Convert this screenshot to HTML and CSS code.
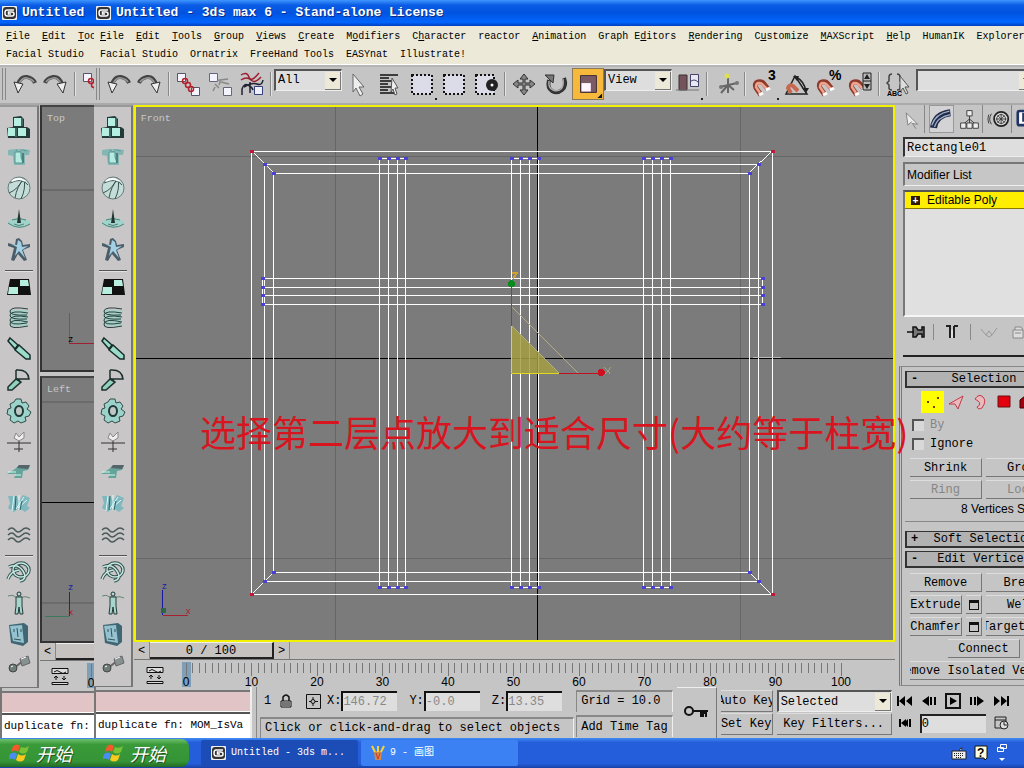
FILE: index.html
```html
<!DOCTYPE html>
<html lang="en">
<head>
  <meta charset="UTF-8">
  <meta name="viewport" content="width=device-width, initial-scale=1.0">
  <title>Untitled - 3ds max 6 - Stand-alone License</title>
  <link rel="stylesheet" href="styles.css">
</head>
<body>
  <!-- icon library -->
  <svg class="defs" aria-hidden="true">
    <symbol id="logo" viewBox="0 0 15 14"><rect width="15" height="14" rx="1" fill="#eee"/><rect x="1" y="1" width="13" height="12" rx="3" fill="#333"/><path d="M12 4H5Q3 4 3 7t2 3h5q2 0 2-2t-2-2H6.500v2H9" fill="none" stroke="#fff" stroke-width="1.500"/></symbol>
    <symbol id="undo" viewBox="0 0 32 32"><path d="M10 16Q13 8 19 9q6 1 8 6" fill="none" stroke="#444" stroke-width="4"/><path d="M11 16Q14 9 19 10q5 1 7 4" fill="none" stroke="#999" stroke-width="1.500"/><path d="M6 14l9 2-5 9z" fill="#eee" stroke="#333"/></symbol>
    <symbol id="redo" viewBox="0 0 32 32"><path d="M22 16Q19 8 13 9q-6 1-8 6" fill="none" stroke="#444" stroke-width="4"/><path d="M21 16Q18 9 13 10q-5 1-7 4" fill="none" stroke="#999" stroke-width="1.500"/><path d="M26 14l-9 2 6 9z" fill="#eee" stroke="#333"/></symbol>
    <symbol id="link" viewBox="0 0 32 32"><path d="M5.500 5.500h8v8h-8zM19.500 19.500h8v8h-8z" fill="#f4f4ff" stroke="#556"/><g fill="none" stroke="#b3202c" stroke-width="1.500"><circle cx="13" cy="13" r="2.500"/><circle cx="16" cy="17" r="2.500"/><circle cx="19" cy="21" r="2.500"/></g></symbol>
    <symbol id="unlink" viewBox="0 0 32 32"><path d="M5.500 5.500h8v8h-8zM19.500 19.500h8v8h-8z" fill="#f4f4ff" stroke="#667"/><path d="M13 13q5-3 2 4m-4-1l4 4m1-8l8-1m-7 3l8 2M11 19l-2 4" fill="none" stroke="#888" stroke-width="1.500"/></symbol>
    <symbol id="bind" viewBox="0 0 32 32"><path d="M5 7q6-4 8 2t10-4M5 12q6-4 10 0t10-3" fill="none" stroke="#9c2030" stroke-width="1.500"/><path d="M6 27v-6q2-6 6-4t5 5M8 19q8-5 13-3t6-4M14 14v11" fill="none" stroke="#223" stroke-width="1.500"/><path d="M18.500 18.500h8v8h-8z" fill="#eef" stroke="#33407a"/></symbol>
    <symbol id="cursor" viewBox="0 0 32 32"><path d="M11 6l11 13h-5l4 7-3 2-4-8-3 4z" fill="#eee" stroke="#666"/></symbol>
    <symbol id="byname" viewBox="0 0 32 32"><path d="M6 7h18M6 10h9M6 13h13M6 16h8M6 19h11M6 22h8M6 25h14" stroke="#111" stroke-width="1.500"/><path d="M18 10l6 10h-3l2 6-2 1-2-6-2 3z" fill="#eee" stroke="#555"/></symbol>
    <symbol id="region" viewBox="0 0 32 32"><rect x="6" y="7" width="20" height="19" fill="#dcdce8" stroke="#111" stroke-width="2" stroke-dasharray="2 2"/></symbol>
    <symbol id="crossing" viewBox="0 0 32 32"><rect x="6" y="7" width="18" height="19" fill="#dcdce8" stroke="#111" stroke-width="2" stroke-dasharray="2 2"/><circle cx="22" cy="17" r="6" fill="#222"/><circle cx="22" cy="17" r="1.500" fill="#fff"/></symbol>
    <symbol id="move" viewBox="0 0 32 32"><path d="M16 6l4 5h-3v4h5v-3l5 4-5 4v-3h-5v5h3l-4 5-4-5h3v-5h-5v3l-5-4 5-4v3h5v-4h-3z" fill="#888" stroke="#333"/></symbol>
    <symbol id="rotate" viewBox="0 0 32 32"><path d="M9 12q-2 8 3 11t10-1 2-12" fill="none" stroke="#333" stroke-width="4"/><path d="M9 13q-1 7 4 9t8-1 2-10" fill="none" stroke="#aaa" stroke-width="1.500"/><path d="M5 7h9l-1 8z" fill="#777" stroke="#333"/></symbol>
    <symbol id="scale" viewBox="0 0 32 32"><path d="M8 7h17v18H8z" fill="#7a5a64" stroke="#3a2a38"/><path d="M9 15h10v9H9z" fill="#fff4ff"/><path d="M31 26v5h-5z" fill="#111"/></symbol>
    <symbol id="pivot" viewBox="0 0 32 32"><path d="M7 7h8v15H7z" fill="#76525d" stroke="#333"/><path d="M18.500 6.500h8v12h-8zM18 14q4-4 8 0" fill="#e8e8f4" stroke="#446"/><path d="M4 22h23" stroke="#777"/></symbol>
    <symbol id="manip" viewBox="0 0 32 32"><path d="M18 9v16M10 19l17-4M11 25l7-8 6 5" stroke="#666" stroke-width="2" fill="none"/><circle cx="17" cy="8" r="2.500" fill="#dde04a"/><circle cx="27" cy="15" r="2" fill="#777"/><circle cx="11" cy="19" r="2" fill="#777"/></symbol>
    <symbol id="magnet" viewBox="0 0 32 32"><path d="M13 27l-5-7q-2-5 2-6t6 2l4 5" fill="none" stroke="#8d3a2c" stroke-width="5"/><path d="M12 25l-4-6q0-4 3-4t5 3l3 3" fill="none" stroke="#f0a38c" stroke-width="2.500"/><path d="M11 27l4-2M18 22l4-2" stroke="#fff" stroke-width="3"/></symbol>
    <symbol id="anglesnap" viewBox="0 0 32 32"><path d="M6 26h21L15 8zM16 9q8 4 10 14" fill="none" stroke="#222" stroke-width="1.500"/><path d="M11 25l-3-5q1-4 5-2l5 5" fill="none" stroke="#c7694f" stroke-width="4"/><path d="M13 8h6l-2 5zM22 20h7l-3 5z" fill="#222"/></symbol>
    <symbol id="spinsnap" viewBox="0 0 32 32"><use href="#magnet"/><path d="M19 5h8v17h-8zM19 13h8" fill="#bbb" stroke="#222"/><path d="M23 6l3 5h-6zM23 21l3-5h-6z" fill="#222"/></symbol>
    <symbol id="sets" viewBox="0 0 32 32"><path d="M10 6q-3 0-3 3v4l-2 2 2 2v3q0 2 3 2M15 6q3 0 3 3v4l2 2-2 2v3q0 2-3 2" fill="none" stroke="#444" stroke-width="1.500"/><path d="M18 8l9 11h-4l3 6-2 1-3-6-3 4z" fill="#ddd" stroke="#555"/></symbol>

    <symbol id="t-boxes" viewBox="0 0 26 26"><path d="M7 4l8-1 3 3v8h3l3 2v9H2l-1-10 6-1z" fill="#223b39"/><path d="M8 5h7v8H8zM2 15h7v8H2zM12 15h8v8h-8z" fill="#b4efe2"/><path d="M16 5v8m-6 2v9" stroke="#65928b"/></symbol>
    <symbol id="t-shirt" viewBox="0 0 26 26"><path d="M2 6l7-1h8l7 1-1 5h-4v10H8l-1-9-5-1z" fill="#84b6b3"/><path d="M9 8h6v5l2 6H9zM10 6q3 3 6 0l5 1" fill="#b3ebe0" stroke="#5b9392"/><path d="M17 9v10" stroke="#4d807e" stroke-width="2"/></symbol>
    <symbol id="t-ball" viewBox="0 0 26 26"><circle cx="13" cy="13" r="11" fill="#c4ddd8" stroke="#667c7c"/><path d="M4 8q12-6 18 2M3 18Q13 14 17 3M9 23q2-12 9-19M15 24Q20 14 18 4" fill="none" stroke="#38534f"/><path d="M6 6q7-4 13 0" stroke="#fff" stroke-width="2" fill="none"/></symbol>
    <symbol id="t-drop" viewBox="0 0 26 26"><ellipse cx="13" cy="17" rx="11" ry="5" fill="#a0d3ca"/><path d="M2 17q11 8 22 1M6 14q7-3 14 0M8 18q5 3 10 0" fill="none" stroke="#54817a"/><path d="M13 3l2 14h-4z" fill="#213432"/></symbol>
    <symbol id="t-star" viewBox="0 0 26 26"><path d="M10 2l3-1 3 3 1 4 7-1v3l-7 3 4 10-3 1-6-7-4 7-3-1 3-12-6-2V6l7 2z" fill="#4c5d6a"/><path d="M12 3l3 2 1 5 6-1-6 4 3 8-6-7-4 5 2-9-6-3 6 1z" fill="#a3d1e3"/></symbol>
    <symbol id="t-check" viewBox="0 0 26 26"><path d="M4 5h19l2 16H1z" fill="#111"/><path d="M14 6h8l1 6h-9zM3 13h9v7H2z" fill="#b8eee0"/></symbol>
    <symbol id="t-spring" viewBox="0 0 26 26"><path d="M3 5h18v16H3z" fill="#a5cfc7"/><path d="M22 4Q5 1 4 6t17 4M22 8Q5 5 4 10t17 4M22 12Q5 9 4 15t17 3M22 17Q5 13 4 19t18 2" fill="none" stroke="#29413e"/></symbol>
    <symbol id="t-damper" viewBox="0 0 26 26"><path d="M4 2l8 7-3 4-7-8zM13 9l11 10v4h-4L9 14z" fill="#9adbc9" stroke="#172b28" stroke-width="1.500"/></symbol>
    <symbol id="t-hinge" viewBox="0 0 26 26"><path d="M10 12L2 20v3h4l9-8z" fill="#91d1c0" stroke="#1c302c" stroke-width="1.500"/><path d="M10 3v8l4 3M10 3q12-1 13 9H11" fill="none" stroke="#1c302c" stroke-width="1.500"/></symbol>
    <symbol id="t-gear" viewBox="0 0 26 26"><path d="M10 1h5l1 4 4-1 3 4-2 3 4 3-2 4-4 1 1 4-5 2-3-2-4 2-4-3 1-4-4-2 1-5 3-1-1-4 4-2z" fill="#9bd2ca" stroke="#314b48"/><ellipse cx="13" cy="13" rx="4" ry="5" fill="#bfc7c5" stroke="#203a38" stroke-width="2"/></symbol>
    <symbol id="t-wind" viewBox="0 0 26 26"><path d="M1 14h24M13 8v15M8 20h9" stroke="#333"/><path d="M10 4l3 4 5-5v6l-5 3-5-3z" fill="#eee" stroke="#888"/></symbol>
    <symbol id="t-car" viewBox="0 0 26 26"><path d="M9 9l4-4 11 1-2 4-5 1-1 7H8l2-4H1l5-3z" fill="#65a49a"/><path d="M13 5h11l-2 4-11-1z" fill="#56646a"/><path d="M2 12h8m-1 3h6" stroke="#cfe"/></symbol>
    <symbol id="t-crack" viewBox="0 0 26 26"><path d="M2 5h8l3 5 4-6 7 3-3 8 3 2-5 4-6-4-5 4-6-4 2-5z" fill="#7fb8be"/><path d="M8 5L6 20M13 4v15m5-13l-8 12m11-9l-9 8" stroke="#dffafa"/><path d="M10 5l-1 14m7-9l-2 9" stroke="#266"/></symbol>
    <symbol id="t-water" viewBox="0 0 26 26"><path d="M2 8q4-4 7 0t7 0 8 0M2 13q4-4 7 0t7 0 8 0M2 18q4-4 7 0t7 0 8 0" fill="none" stroke="#4c5a5a" stroke-width="1.500"/></symbol>
    <symbol id="t-knot" viewBox="0 0 26 26"><g fill="none" stroke="#34504e" stroke-width="3.500"><ellipse cx="15" cy="11" rx="8" ry="7"/><path d="M3 8q9-4 14 4t-3 10M2 20q3-8 11-9"/></g><g fill="none" stroke="#c5e9e2" stroke-width="1.500"><ellipse cx="15" cy="11" rx="8" ry="7"/><path d="M3 8q9-4 14 4t-3 10M2 20q3-8 11-9"/></g></symbol>
    <symbol id="t-man" viewBox="0 0 26 26"><circle cx="13" cy="4" r="2" fill="#b9d7d2" stroke="#233"/><path d="M2 6q4-2 8 1h6q4-1 8 1" fill="none" stroke="#687"/><path d="M10 7v9l-1 8h3l1-7 1 7h3l-1-8V7z" fill="#a7d4cc" stroke="#243c38"/></symbol>
    <symbol id="t-pc" viewBox="0 0 26 26"><path d="M3 4l15-2 4 3v16l-5 4-12-3z" fill="#3f6672"/><path d="M4 5l12-1 2 18-11-2z" fill="#94c2d0"/><path d="M11 7l1 9m-4-8v3m7-3v3M8 18l7 1" stroke="#355"/></symbol>
    <symbol id="t-joint" viewBox="0 0 26 26"><path d="M8 16l9-7" stroke="#666" stroke-width="2"/><circle cx="7" cy="16" r="4" fill="#6f7c79" stroke="#444"/><path d="M14 7l8-3 2 7-8 3z" fill="#879190" stroke="#666"/><path d="M15 7l5-2M5 15l2-1" stroke="#fff"/></symbol>
    <symbol id="keymode" viewBox="0 0 18 18"><path d="M1 1.500h16v5H1zM1 15.500h16v2H1z" fill="#ddd" stroke="#111"/><path d="M3 5q3-3 6 0t6 0M5 13V9M3 11l2-2 2 2M13 9v4m-2-2l2 2 2-2" fill="none" stroke="#111"/></symbol>
    <symbol id="flag" viewBox="0 0 22 20"><path d="M4 3q4-3 7 0L9 9q-3-3-7 0z" fill="#f25a29"/><path d="M12 4q4 2 8-1l-2 6q-4 3-8 0z" fill="#79c233"/><path d="M1 11q4-3 7 0l-2 6q-3-3-7 0z" fill="#4a8df2"/><path d="M9 11q4 3 8 0l-2 6q-4 3-8 0z" fill="#fbc820"/></symbol>
  </svg>

  <!-- older window, only its left edge is in view -->
  <section class="app behind">
    <header class="titlebar"><svg class="logo"><use href="#logo"/></svg><span>Untitled</span></header>
    <nav class="menus">
      <div class="menu-row"><a href="#"><u>F</u>ile</a><a href="#"><u>E</u>dit</a><a href="#"><u>T</u>ools</a></div>
      <div class="menu-row"><a href="#">Facial Studio</a></div>
    </nav>
    <div class="toolbar">
      <i class="grip"></i>
      <button class="tool" aria-label="Undo"><svg><use href="#undo"/></svg></button>
      <button class="tool" aria-label="Redo"><svg><use href="#redo"/></svg></button>
      <i class="sep"></i>
      <button class="tool" aria-label="Link"><svg><use href="#link"/></svg></button>
    </div>
    <main class="work">
      <aside class="side-tools"></aside>
      <div class="center">
        <div class="viewport small">
          <svg viewBox="41 107 53 264" preserveAspectRatio="xMinYMin slice" shape-rendering="crispEdges">
            <path d="M40 190.500h60" stroke="#696969" stroke-width="2"/>
            <text x="46" y="121" class="view-name">Top</text>
            <path d="M68.500 314v30" stroke="#3c7a3c"/><path d="M68 344.500h30" stroke="#a02030"/>
            <text x="67" y="343" class="axis">z</text>
          </svg>
        </div>
        <div class="viewport small">
          <svg viewBox="41 377 53 264" preserveAspectRatio="xMinYMin slice" shape-rendering="crispEdges">
            <path d="M40 401.500h60M40 602.500h60" stroke="#6b6b6b" stroke-width="2"/><path d="M40 501.500h60" stroke="#000"/>
            <text x="46" y="391" class="view-name">Left</text>
            <path d="M68.500 592v24" stroke="#2020a0"/><path d="M44 616.500h24" stroke="#3c7a5c"/>
            <text x="67" y="590" class="axis blue">z</text><text x="67" y="615" class="axis red">x</text>
          </svg>
        </div>
        <div class="scrub"><button class="step">&lt;</button><button class="slider"></button></div>
        <div class="timeline"><svg class="keymode"><use href="#keymode"/></svg><div class="ruler"></div></div>
      </div>
    </main>
    <footer class="status">
      <div class="listener"><div class="pink"></div><div class="white">duplicate fn:</div></div>
    </footer>
    <div class="taskbar"><button class="start"><svg><use href="#flag"/></svg>开始</button></div>
  </section>

  <section class="app front">
    <header class="titlebar"><svg class="logo"><use href="#logo"/></svg><span>Untitled - 3ds max 6 - Stand-alone License</span></header>
    <nav class="menus">
      <div class="menu-row">
        <a href="#"><u>F</u>ile</a><a href="#"><u>E</u>dit</a><a href="#"><u>T</u>ools</a><a href="#"><u>G</u>roup</a><a href="#"><u>V</u>iews</a><a href="#"><u>C</u>reate</a><a href="#">M<u>o</u>difiers</a><a href="#">C<u>h</u>aracter</a><a href="#">reactor</a><a href="#"><u>A</u>nimation</a><a href="#">Graph E<u>d</u>itors</a><a href="#"><u>R</u>endering</a><a href="#">C<u>u</u>stomize</a><a href="#"><u>M</u>AXScript</a><a href="#"><u>H</u>elp</a><a href="#">HumanIK</a><a href="#">Explorer</a>
      </div>
      <div class="menu-row">
        <a href="#">Facial Studio</a><a href="#">Ornatrix</a><a href="#">FreeHand Tools</a><a href="#">EASYnat</a><a href="#">Illustrate!</a>
      </div>
    </nav>
    <div class="toolbar">
      <i class="grip"></i>
      <button class="tool" aria-label="Undo"><svg><use href="#undo"/></svg></button>
      <button class="tool" aria-label="Redo"><svg><use href="#redo"/></svg></button>
      <i class="sep"></i>
      <button class="tool" aria-label="Link"><svg><use href="#link"/></svg></button>
      <button class="tool" aria-label="Unlink"><svg><use href="#unlink"/></svg></button>
      <button class="tool" aria-label="Bind"><svg><use href="#bind"/></svg></button>
      <i class="sep"></i>
      <div class="drop"><select aria-label="Selection filter"><option>All</option></select></div>
      <button class="tool" aria-label="Select"><svg><use href="#cursor"/></svg></button>
      <button class="tool" aria-label="Select by name"><svg><use href="#byname"/></svg></button>
      <button class="tool more" aria-label="Region"><svg><use href="#region"/></svg></button>
      <button class="tool" aria-label="Window"><svg><use href="#region"/></svg></button>
      <button class="tool" aria-label="Crossing"><svg><use href="#crossing"/></svg></button>
      <i class="sep"></i>
      <button class="tool" aria-label="Move"><svg><use href="#move"/></svg></button>
      <button class="tool" aria-label="Rotate"><svg><use href="#rotate"/></svg></button>
      <button class="tool active" aria-label="Scale"><svg><use href="#scale"/></svg></button>
      <div class="drop"><select aria-label="Coordinate system"><option>View</option></select></div>
      <button class="tool more" aria-label="Pivot"><svg><use href="#pivot"/></svg></button>
      <i class="sep"></i>
      <button class="tool" aria-label="Manipulate"><svg><use href="#manip"/></svg></button>
      <i class="sep"></i>
      <button class="tool more" aria-label="Snap"><svg><use href="#magnet"/><text x="20" y="12" class="snap">3</text></svg></button>
      <button class="tool" aria-label="Angle snap"><svg><use href="#anglesnap"/></svg></button>
      <button class="tool" aria-label="Percent snap"><svg><use href="#magnet"/><text x="17" y="12" class="snap">%</text></svg></button>
      <button class="tool" aria-label="Spinner snap"><svg><use href="#spinsnap"/></svg></button>
      <i class="sep"></i>
      <button class="tool" aria-label="Named selections"><svg><use href="#sets"/><text x="5" y="28" class="abc">ABC</text></svg></button>
      <div class="drop wide"><select aria-label="Named selection sets"><option></option></select></div>
    </div>
    <main class="work">
      <aside class="side-tools"></aside>
      <div class="center">
        <div class="viewport current">
          <svg viewBox="136 107 757 534" shape-rendering="crispEdges">
            <path d="M335.500 100v550M740.500 100v550M130 156.500h770M130 559.500h770" stroke="#666"/>
            <path d="M537.500 100v550M130 358.500h770" stroke="#000"/>
            <text x="140" y="121" class="view-name">Front</text>
            <g fill="none" stroke="#fff">
              <path d="M251.500 151.500h521v444h-521zM264.500 164.500h494v418h-494zM273.500 173.500h476v400h-476z"/>
              <path d="M251 151l22 22M773 151l-24 22M251 596l22-23M773 596l-24-23"/>
              <path d="M379.500 158v430M388.500 158v430M397.500 158v430M405.500 158v430"/>
              <path d="M511.500 158v430M520.500 158v430M529.500 158v430M538.500 158v430"/>
              <path d="M643.500 158v430M652.500 158v430M661.500 158v430M670.500 158v430"/>
              <path d="M262 278.500h500M262 287.500h500M262 295.500h500M262 304.500h500"/>
              <path d="M262.500 278v27M762.500 278v27M379 158.500h27M511 158.500h27M643 158.500h27M379 588.500h27M511 588.500h27M643 588.500h27"/>
            </g>
            <g id="verts"></g>
            <path d="M753 357.500h29" stroke="#bbb"/>
            <path d="M511 326v48h48z" fill="#a59d42" fill-opacity=".85"/>
            <path d="M512 307l66 66M512 326l47 47" stroke="#b5ae82" fill="none"/>
            <path d="M511.500 326v47.500h48" fill="none" stroke="#e0d820"/>
            <path d="M511.500 286v40" stroke="#0b8a1c"/><circle cx="511.500" cy="284" r="3.500" fill="#0b8a1c"/>
            <path d="M559 373.500h42" stroke="#c01020"/><circle cx="601.500" cy="373" r="3.500" fill="#d01020"/>
            <path d="M512 273h5l-4 6" stroke="#d0a030" fill="none" stroke-width="2"/><path d="M605 367l6 7m0-7l-6 7" stroke="#a8a078" fill="none"/>
            <path d="M161.500 591v25" stroke="#1818a8"/><path d="M162 616.500h25" stroke="#a82030"/><path d="M160 609h5v5h-5z" fill="#2d6748"/>
            <text x="161" y="590" class="axis blue">z</text><text x="185" y="615" class="axis red">x</text>
          </svg>
        </div>
        <div class="scrub"><button class="step">&lt;</button><button class="slider">0 / 100</button><button class="step">&gt;</button></div>
        <div class="timeline"><svg class="keymode"><use href="#keymode"/></svg><div class="ruler"></div></div>
      </div>
      <aside class="panel">
        <div class="tabs">
          <button aria-label="Create"><svg viewBox="0 0 26 24"><path d="M7 5l13 13-6-1 4 6M7 5l2 14 4-4" fill="#eee" stroke="#777"/></svg></button>
          <button class="on" aria-label="Modify"><svg viewBox="0 0 26 24"><path d="M4 22Q6 7 23 5" fill="none" stroke="#222c44" stroke-width="8"/><path d="M2 19Q6 6 22 3M5 21Q8 10 23 7" fill="none" stroke="#9fb0d0" stroke-width="1.500"/></svg></button>
          <button aria-label="Hierarchy"><svg viewBox="0 0 26 24"><path d="M13 7v6M6 18l7-6 7 6M13 12v6" stroke="#333" fill="none"/><path d="M10 2.500h6v6h-6zM3 16.500h6v6H3zM10 16.500h6v6h-6zM17 16.500h6v6h-6z" fill="#eee" stroke="#333"/></svg></button>
          <button aria-label="Motion"><svg viewBox="0 0 26 24"><circle cx="16" cy="12" r="8" fill="#ddd" stroke="#222" stroke-width="2"/><circle cx="16" cy="12" r="5" fill="none" stroke="#333"/><path d="M16 6v12M10 12h12M12 8l8 8m0-8l-8 8M5 6q-4 6 0 12M2 7q-2 5 0 10" fill="none" stroke="#333"/></svg></button>
          <button aria-label="Display"><svg viewBox="0 0 26 24"><rect x="2" y="3" width="20" height="16" rx="2" fill="#fff" stroke="#223366" stroke-width="3"/><path d="M8 5v9h8" fill="none" stroke="#223366" stroke-width="2"/></svg></button>
        </div>
        <input class="name" type="text" value="Rectangle01" aria-label="Object name">
        <select class="modifiers" aria-label="Modifier list"><option>Modifier List</option></select>
        <div class="stack"><div class="stack-item"><b>+</b>Editable Poly</div></div>
        <div class="stack-tools">
          <button aria-label="Pin"><svg viewBox="0 0 24 20"><path d="M4 10h7M10 5v10h3l2-3h4v3h2V5h-2v3h-4l-2-3z" fill="#777" stroke="#111" stroke-width="1.500"/></svg></button>
          <i></i>
          <button aria-label="Show end result"><svg viewBox="0 0 24 20"><path d="M6 4h4v12M14 4h4M14 4v12" fill="none" stroke="#222" stroke-width="2"/><path d="M12 8v8" stroke="#fff"/></svg></button>
          <i></i>
          <button aria-label="Make unique"><svg viewBox="0 0 24 20"><path d="M4 7l5 6 3-4 3 4 5-7M9 13l3 2 3-2" fill="none" stroke="#999"/></svg></button>
          <button aria-label="Remove modifier"><svg viewBox="0 0 24 20"><path d="M7 8h10v8H7zM9 8V5h6l2 3M9 11h6" fill="#ddd" stroke="#888"/></svg></button>
        </div>
        <div class="rollouts">
          <div class="rollout">
            <button class="head"><b>-</b>Selection</button>
            <div class="levels">
              <button class="on" aria-label="Vertex"><svg viewBox="0 0 22 20"><path d="M6 9h2v2H6zM12 14h2v2h-2zM16 5h2v2h-2z" fill="#873a00"/></svg></button>
              <button aria-label="Edge"><svg viewBox="0 0 22 20"><path d="M4 12L18 4l-5 13-3-5z" fill="#e9b9be" stroke="#c23b48"/></svg></button>
              <button aria-label="Border"><svg viewBox="0 0 22 20"><path d="M6 7q4-6 8-2t-1 11q-4 2-5-1 5-3 1-6z" fill="#e9b9be" stroke="#c23b48"/></svg></button>
              <button aria-label="Polygon"><svg viewBox="0 0 22 20"><path d="M5 4h12v11H5z" fill="#e3000f" stroke="#6b1010"/></svg></button>
              <button aria-label="Element"><svg viewBox="0 0 22 20"><path d="M3 8l5-4h8v12H3z" fill="#a3000f" stroke="#400"/></svg></button>
            </div>
            <label class="tick off"><input type="checkbox" disabled>By</label>
            <label class="tick"><input type="checkbox">Ignore</label>
            <div class="pair first"><button>Shrink</button><button>Grow</button></div>
            <div class="pair"><button disabled>Ring</button><button disabled>Loop</button></div>
            <p class="count">8 Vertices Selected</p>
          </div>
          <div class="rollout closed"><button class="head"><b>+</b>Soft Selection</button></div>
          <div class="rollout">
            <button class="head"><b>-</b>Edit Vertices</button>
            <div class="pair first"><button>Remove</button><button>Break</button></div>
            <div class="pair"><button>Extrude</button><button class="box" aria-label="Extrude settings"><i></i></button><button>Weld</button></div>
            <div class="pair"><button>Chamfer</button><button class="box" aria-label="Chamfer settings"><i></i></button><button>Target Weld</button></div>
            <div class="pair single"><button>Connect</button></div>
            <div class="pair"><button>Remove Isolated Vertices</button></div>
          </div>
        </div>
      </aside>
    </main>
    <footer class="status">
      <div class="listener"><div class="pink"></div><div class="white">duplicate fn: MOM_IsVa</div></div>
      <div class="info">
        <div class="coords">
          <span class="count-box">1</span>
          <svg class="lock" viewBox="0 0 12 14"><path d="M3 7V3q3-4 6 0v4" fill="none" stroke="#111" stroke-width="1.500"/><path d="M1 7h10v6H1zM2 9h8M2 11h8" fill="#ddd" stroke="#111"/></svg>
          <svg class="abs" viewBox="0 0 15 15"><path d="M.500.500h14v14H.500zM7 3v9M3 7.500h9" fill="none" stroke="#111"/><circle cx="7" cy="7.500" r="2" fill="#bbb" stroke="#111"/></svg>
          <label>X:<input type="text" value="146.72"></label>
          <label>Y:<input type="text" value="-0.0"></label>
          <label>Z:<input type="text" value="13.35"></label>
        </div>
        <div class="prompt">Click or click-and-drag to select objects</div>
      </div>
      <div class="grid-info"><div>Grid = 10.0</div><button>Add Time Tag</button></div>
      <button class="bigkey" aria-label="Set keys"><svg viewBox="0 0 26 14"><circle cx="6" cy="7" r="4" fill="none" stroke="#111" stroke-width="2"/><path d="M10 7h15M18 7v5h2V9h3v4" fill="none" stroke="#111" stroke-width="2"/></svg></button>
      <div class="keys"><button>Auto Key</button><button>Set Key</button></div>
      <div class="filters"><div class="drop"><select aria-label="Key set"><option>Selected</option></select></div><button>Key Filters...</button></div>
      <div class="play">
        <div class="play-row">
          <button aria-label="Go to start"><svg viewBox="0 0 18 16"><path d="M1 3h2v10H1zM9 3v10L3 8zM16 3v10l-6-5z"/></svg></button>
          <button aria-label="Previous"><svg viewBox="0 0 18 16"><path d="M9 3v10L2 8zM10 4h2v8h-2zM14 4h2v8h-2z"/></svg></button>
          <button class="boxed" aria-label="Play"><svg viewBox="0 0 18 16"><path d="M2 1h14v14H2z" fill="none" stroke="#111" stroke-width="2"/><path d="M6 4v8l7-4z"/></svg></button>
          <button aria-label="Next"><svg viewBox="0 0 18 16"><path d="M9 3v10l7-5zM6 4h2v8H6zM2 4h2v8H2z"/></svg></button>
          <button aria-label="Go to end"><svg viewBox="0 0 18 16"><path d="M15 3h2v10h-2zM9 3v10l6-5zM2 3v10l6-5z"/></svg></button>
        </div>
        <div class="play-row">
          <button aria-label="Key mode"><svg viewBox="0 0 18 16"><path d="M3 4h2v8H3zM10 4v8L5 8zM15 4h-2v8h2zM12 4v8L8 8z"/></svg></button>
          <input type="text" value="0" aria-label="Current frame">
          <button class="config" aria-label="Time configuration"><svg viewBox="0 0 18 16"><path d="M3 2h11v11H3zM3 5h11" fill="none" stroke="#222"/><circle cx="12" cy="10" r="4" fill="#ddd" stroke="#222"/><path d="M12 7v3h3" fill="none" stroke="#222"/></svg></button>
        </div>
      </div>
    </footer>
    <div class="taskbar">
      <button class="start"><svg><use href="#flag"/></svg>开始</button>
      <button class="task pressed"><svg class="logo"><use href="#logo"/></svg>Untitled - 3ds m...</button>
      <button class="task"><svg viewBox="0 0 14 16"><path d="M3 6h8l-1 9H4z" fill="#c98a4a"/><path d="M4 7L1 1M7 7V1M10 7l3-6" stroke="#f3d23c" stroke-width="2"/><path d="M5 8l2 6 2-6" stroke="#d33" fill="none"/></svg>9 - 画图</button>
      <div class="tray">
        <svg viewBox="0 0 16 16"><path d="M1 6h14v8H1zM8 6q0-3 4-3" fill="#eee" stroke="#222"/><path d="M3 8.500h10M3 10.500h10M5 12.500h6" stroke="#222" stroke-dasharray="1 1"/></svg>
        <svg viewBox="0 0 16 16"><path d="M2 1h12v12l-2 2-1-2H2z" fill="#ffffe0" stroke="#111"/><text x="4" y="12" class="help">?</text></svg>
        <svg class="restore" viewBox="0 0 16 24"><path d="M5.500 3.500h6v4h-6zM2.500 6.500h6v4h-6z" fill="#2a62dc" stroke="#fff"/><path d="M4 17h6l-3 3z" fill="#fff"/></svg>
      </div>
    </div>
  </section>

  <p class="caption">选择第二层点放大到适合尺寸(大约等于柱宽)</p>

  <script src="script.js"></script>
</body>
</html>
```
FILE: styles.css
```css
* {
  box-sizing: border-box;
}

body {
  margin: 0;
  height: 100vh;
  display: flex;
  position: relative;
  overflow: hidden;
  background: #c5c5c5;
  color: #000;
  font: 12px/16px "Liberation Mono", "Noto Sans CJK SC", monospace;
}

button, input, select {
  font: inherit;
  color: inherit;
  margin: 0;
  padding: 0;
  border: 0;
  border-radius: 0;
  background: none;
}

.defs {
  position: absolute;
  width: 0;
  height: 0;
}

.app {
  display: flex;
  flex-direction: column;
  overflow: hidden;
  min-width: 0;
}

.behind {
  flex: 0 0 94px;
}

.front {
  flex: 1;
}

/* title and menus */
.titlebar {
  flex: 0 0 26px;
  display: flex;
  align-items: center;
  gap: 5px;
  padding-left: 2px;
  background: linear-gradient(#3f95ff, #0a5ce4 20%, #0053e0 50%, #0066ff 85%, #003fc0);
  color: #fff;
  font-size: 13px;
  font-weight: bold;
  white-space: nowrap;
  text-shadow: 1px 1px #0a2a80;
}

.logo {
  width: 15px;
  height: 14px;
  flex: none;
}

.menus {
  flex: 0 0 39px;
  padding-top: 2px;
  background: #ece9d8;
  border-bottom: 1px solid #fff;
  font-size: 10px;
}

.menu-row {
  display: flex;
  gap: 12px;
  height: 18px;
  padding-left: 6px;
  align-items: center;
  white-space: nowrap;
  overflow: hidden;
}

.menu-row a {
  color: #000;
  text-decoration: none;
}

/* main toolbar */
.toolbar {
  flex: 0 0 40px;
  display: flex;
  align-items: center;
  padding-bottom: 3px;
  border-top: 2px solid #b4b4b4;
  border-bottom: 2px solid #aaa;
  background: #c6c5c6;
}

.grip {
  flex: 0 0 4px;
  height: 32px;
  margin: 0 2px;
  border-left: 1px solid #888;
  border-right: 1px solid #888;
}

.tool {
  flex: 0 0 32px;
  height: 32px;
  position: relative;
}

.tool svg {
  display: block;
  width: 32px;
  height: 32px;
}

.tool.active {
  background: #f7b93c;
  border: 1px solid #8a7a5a;
}

.tool.active svg {
  width: 30px;
  height: 30px;
}

.tool.more::after {
  content: "";
  position: absolute;
  right: 1px;
  bottom: 0;
  width: 2px;
  height: 2px;
  background: #222;
}

.sep {
  flex: 0 0 2px;
  height: 24px;
  margin: 0 2px;
  border-left: 1px solid #888;
  border-right: 1px solid #e4e4e4;
}

.snap {
  font: bold 14px "Liberation Sans", sans-serif;
}

.abc {
  font: bold 7px "Liberation Sans", sans-serif;
}

.drop {
  position: relative;
  flex: 0 0 68px;
  height: 22px;
  margin-bottom: 8px;
  background: #dedede;
  border: 1px solid #eee;
  border-top: 2px solid #555;
  border-left: 2px solid #555;
}

.drop select {
  appearance: none;
  width: 100%;
  height: 100%;
  padding-left: 2px;
}

.drop::after {
  content: "";
  position: absolute;
  right: 4px;
  top: 7px;
  border: 4px solid transparent;
  border-top-color: #000;
  border-bottom: 0;
}

.drop::before {
  content: "";
  position: absolute;
  right: 0;
  top: 1px;
  width: 15px;
  height: 17px;
  background: #ece9d8;
  border-right: 1px solid #777;
  border-bottom: 1px solid #777;
  pointer-events: none;
}

.drop.wide {
  flex: 0 0 120px;
  margin-left: 2px;
}

/* work area */
.work {
  flex: 1;
  display: flex;
  min-height: 0;
}

.side-tools {
  flex: 0 0 39px;
  display: flex;
  flex-direction: column;
  align-items: center;
  padding-top: 6px;
  border-top: 2px solid #999;
  border-right: 2px solid #777;
  border-bottom: 1px solid #777;
  background: #c8c6c7;
}

.side-tools button {
  width: 26px;
  height: 31px;
}

.side-tools svg {
  width: 26px;
  height: 26px;
}

.side-tools hr {
  width: 28px;
  height: 2px;
  margin: 2px 0;
  border: 0;
  border-top: 1px solid #555;
  border-bottom: 1px solid #e2e2e2;
}

.center {
  flex: 1;
  display: flex;
  flex-direction: column;
  min-width: 0;
  padding-left: 1px;
}

.viewport {
  flex: 1;
  min-height: 0;
  overflow: hidden;
  background: #7b7b7b;
}

.viewport svg {
  display: block;
  width: 100%;
  height: 100%;
}

.viewport.current {
  border: 2px solid #f2f200;
}

.viewport.small {
  border-top: 2px solid #444;
  border-left: 2px solid #333;
  border-bottom: 2px solid #333;
}

.viewport.small + .viewport.small {
  margin-top: 4px;
}

.view-name {
  font: 10px "Liberation Mono", monospace;
  fill: #c8c8c8;
}

.axis {
  font: 9px "Liberation Mono", monospace;
}

.axis.blue {
  fill: #1818a8;
}

.axis.red {
  fill: #a82030;
}

.scrub {
  flex: 0 0 18px;
  display: flex;
  border-bottom: 1px solid #777;
  background: #c6c2c0;
}

.step {
  flex: 0 0 16px;
  border-right: 1px solid #888;
}

.slider {
  flex: 0 0 124px;
  height: 17px;
  border-right: 2px solid #222;
  border-bottom: 2px solid #222;
  border-top: 1px solid #eee;
}

.timeline {
  flex: 0 0 27px;
  display: flex;
  padding: 0 54px 0 12px;
}

.keymode {
  flex: 0 0 18px;
  height: 18px;
  margin: 6px 22px 0 0;
}

.behind .timeline {
  padding-left: 11px;
}

.ruler {
  flex: 1;
  min-width: 0;
  font-family: "Liberation Sans", sans-serif;
}

.ruler svg {
  display: block;
  width: 100%;
  height: 26px;
  overflow: visible;
}

.behind .timeline {
  overflow: hidden;
}

.behind .ruler {
  flex: 0 0 654px;
}

/* command panel */
.panel {
  flex: 0 0 129px;
  display: flex;
  flex-direction: column;
  overflow: hidden;
  padding-left: 8px;
}

.tabs {
  display: flex;
  gap: 4px;
  height: 28px;
  margin: 0 0 4px -3px;
}

.tabs button {
  flex: 0 0 25px;
  height: 28px;
  border-right: 1px solid #888;
}

.tabs button.on {
  border: 1px solid #999;
  background: #d3d3d6;
}

.tabs svg {
  display: block;
  width: 23px;
  height: 24px;
}

.name, .modifiers {
  appearance: none;
  flex: none;
  width: 100%;
  height: 20px;
  padding-left: 2px;
  background: #dedede;
  border-top: 2px solid #333;
  border-left: 2px solid #333;
  border-bottom: 1px solid #eee;
}

.modifiers {
  height: 24px;
  margin: 5px 0 4px;
  background: #c6c6c6;
  border-top-color: #777;
  border-left-color: #777;
  font: 12px "Liberation Sans", sans-serif;
}

.stack {
  flex: 0 0 127px;
  background: #e0e0e0;
  border-top: 2px solid #555;
  border-left: 2px solid #777;
  border-bottom: 2px solid #f6f6f6;
  font: 12px/16px "Liberation Sans", sans-serif;
}

.stack-item {
  display: flex;
  align-items: center;
  gap: 7px;
  padding-left: 6px;
  background: #ffee00;
  border-bottom: 1px solid #8a7a00;
  white-space: nowrap;
}

.stack-item b {
  width: 9px;
  height: 9px;
  background: #2b1a00;
  color: #fff;
  line-height: 9px;
  font-size: 10px;
  text-align: center;
}

.stack-tools {
  flex: 0 0 40px;
  display: flex;
  align-items: center;
  gap: 5px;
  padding-bottom: 8px;
  border-bottom: 2px solid #222;
}

.stack-tools button {
  flex: 0 0 24px;
  height: 20px;
}

.stack-tools svg {
  display: block;
  width: 24px;
  height: 20px;
}

.stack-tools i {
  flex: 0 0 1px;
  height: 16px;
  margin: 0 1px;
  background: #888;
}

.rollouts {
  flex: 1;
  margin: 9px 0 1px -4px;
  padding: 4px 0 0 3px;
  border-top: 1px solid #888;
  border-left: 3px double #777;
  border-bottom: 1px solid #888;
  overflow: hidden;
}

.rollout {
  width: 158px;
  display: flex;
  flex-direction: column;
}

.head {
  position: relative;
  height: 17px;
  border: 2px solid #333;
  border-top-width: 1px;
  background: #b2b2b2;
  line-height: 14px;
}

.head b {
  position: absolute;
  left: 4px;
}

.levels {
  display: flex;
  gap: 1px;
  padding: 3px 0 2px 16px;
}

.levels button {
  flex: 0 0 23px;
  height: 22px;
}

.levels button.on {
  background: #ffff00;
}

.levels svg {
  display: block;
  width: 22px;
  height: 20px;
}

.tick {
  display: flex;
  align-items: center;
  gap: 6px;
  height: 19px;
  padding-left: 7px;
}

.tick input {
  appearance: none;
  width: 12px;
  height: 12px;
  background: #d8d8d8;
  border-top: 2px solid #555;
  border-left: 2px solid #555;
}

.off, .pair button:disabled {
  color: #858585;
}

.pair {
  display: flex;
  gap: 4px;
  height: 19px;
  margin: 0 5px 3px;
}

.pair.first {
  margin-top: 5px;
}

.pair.single {
  margin: 0 43px 3px;
}

.pair button {
  flex: 1;
  min-width: 0;
  display: flex;
  justify-content: center;
  align-items: center;
  overflow: hidden;
  white-space: nowrap;
  border-top: 1px solid #ddd;
  border-right: 1px solid #777;
  border-bottom: 1px solid #777;
}

.pair .box {
  flex: 0 0 16px;
}

.pair button:has(+ .box) {
  flex: 0 0 52px;
}

.box i {
  width: 10px;
  height: 10px;
  border: 1px solid #111;
  border-top-width: 3px;
}

.count {
  height: 19px;
  margin: 0;
  padding-left: 56px;
  white-space: nowrap;
  font: 12px/14px "Liberation Sans", sans-serif;
}

.closed {
  padding: 9px 0 3px;
  border-top: 1px solid #888;
}

/* status bar */
.status {
  flex: 0 0 50px;
  display: flex;
  gap: 4px;
  white-space: nowrap;
}

.listener {
  flex: 0 0 158px;
  display: flex;
  flex-direction: column;
  padding-top: 3px;
  border-left: 2px solid #777;
  border-right: 2px solid #eee;
}

.pink {
  height: 22px;
  background: #e0c4c6;
  border-top: 2px solid #777;
  border-bottom: 1px solid #fff;
}

.white {
  flex: 1;
  padding: 2px;
  background: #fff;
  border-top: 2px solid #555;
  overflow: hidden;
  font-size: 11px;
  line-height: 18px;
}

.info {
  flex: 0 0 315px;
  display: flex;
  flex-direction: column;
  gap: 4px;
  padding: 2px 0 0 3px;
  border-left: 1px solid #888;
}

.coords {
  display: flex;
  align-items: center;
  height: 24px;
}

.count-box {
  width: 12px;
  margin-left: 4px;
}

.lock {
  width: 12px;
  height: 14px;
  margin: 0 14px 0 4px;
}

.abs {
  width: 15px;
  height: 15px;
  margin-right: 6px;
}

.coords label {
  display: flex;
  align-items: center;
  margin-right: 12px;
}

.coords input {
  width: 56px;
  height: 20px;
  color: #888;
  background: #dedede;
  border-top: 2px solid #111;
  border-left: 2px solid #111;
}

.prompt, .grid-info > * {
  height: 21px;
  padding: 1px 4px;
  border-top: 2px solid #888;
  border-left: 1px solid #888;
  border-right: 1px solid #eee;
  text-align: left;
}

.grid-info {
  flex: 0 0 96px;
  display: flex;
  flex-direction: column;
  gap: 3px;
  margin-left: -2px;
  padding-top: 3px;
}

.grid-info > * {
  height: 22px;
}

.bigkey {
  flex: 0 0 40px;
  border-top: 1px solid #eee;
  border-right: 1px solid #777;
}

.bigkey svg {
  width: 26px;
  height: 14px;
}

.keys {
  flex: 0 0 52px;
  min-width: 0;
}

.keys, .filters {
  display: flex;
  flex-direction: column;
  gap: 1px;
  padding-top: 3px;
}

.keys button, .filters > button {
  display: flex;
  justify-content: center;
  align-items: center;
  height: 22px;
  overflow: hidden;
  border-top: 1px solid #ddd;
  border-right: 1px solid #777;
  border-bottom: 1px solid #777;
}

.filters {
  flex: 0 0 115px;
}

.filters .drop {
  flex: none;
  margin: 0;
}

.play {
  flex: 1;
  min-width: 0;
  padding-top: 3px;
}

.play-row {
  display: flex;
  align-items: center;
  gap: 6px;
  height: 22px;
}

.play-row button {
  flex: 0 0 18px;
  height: 16px;
}

.play-row svg {
  display: block;
  width: 18px;
  height: 16px;
}

.play-row input {
  width: 66px;
  height: 19px;
  background: #dedede;
  border-top: 2px solid #222;
  border-left: 2px solid #222;
}

/* taskbar */
.taskbar {
  flex: 0 0 30px;
  display: flex;
  align-items: center;
  gap: 3px;
  background: linear-gradient(#3f8cf3, #245edb 15%, #245edb 85%, #1941a5);
  color: #fff;
  font-size: 10px;
}

.start {
  flex: 0 0 95px;
  height: 28px;
  display: flex;
  align-items: center;
  gap: 5px;
  padding-left: 9px;
  border-radius: 0 8px 8px 0;
  background: linear-gradient(#6fbf6a, #3a9a3a 20%, #359435 80%, #226a24);
  font: italic 18px "Noto Sans CJK SC", sans-serif;
  text-shadow: 1px 1px #245024;
}

.behind .start {
  border-radius: 0;
}

.start svg {
  width: 22px;
  height: 20px;
}

.task {
  flex: 0 0 157px;
  height: 26px;
  display: flex;
  align-items: center;
  gap: 5px;
  padding-left: 10px;
  border-radius: 2px;
  background: #3c81f3;
  text-align: left;
}

.task.pressed {
  margin-left: 9px;
  background: #1c4cb6;
}

.task > svg:not(.logo) {
  width: 14px;
  height: 16px;
}

.tray {
  margin-left: auto;
  padding-right: 13px;
  display: flex;
  align-items: center;
  gap: 6px;
}

.tray svg {
  width: 16px;
  height: 16px;
}

.tray .restore {
  height: 24px;
}

.help {
  font: bold 12px "Liberation Sans", sans-serif;
}

/* note written across the viewport */
.caption {
  position: absolute;
  left: 200px;
  top: 406px;
  margin: 0;
  color: #d8151f;
  font: 36px/50px "Noto Sans CJK SC", sans-serif;
  white-space: nowrap;
  pointer-events: none;
}
```
FILE: script.js
```js
const groups = [
  ['boxes', 'shirt', 'ball', 'drop', 'star'],
  ['check', 'spring', 'damper', 'hinge', 'gear', 'wind', 'car', 'crack', 'water'],
  ['knot', 'man', 'pc', 'joint']
];

document.querySelectorAll('.side-tools').forEach(bar => {
  bar.innerHTML = groups
    .map(g => g.map(n => `<button aria-label="${n}"><svg><use href="#t-${n}"/></svg></button>`).join(''))
    .join('<hr>');
});

// frame ruler, 0 - 100
document.querySelectorAll('.ruler').forEach(ruler => {
  let out = '<rect x="-4" y="2" width="9" height="25" fill="#7f9fb8"/>';
  for (let f = 0; f <= 100; f++) {
    const h = f % 10 ? 13 : 16;
    out += `<line x1="${f}%" x2="${f}%" y1="3" y2="${h}" stroke="#777" shape-rendering="crispEdges"/>`;
    if (f % 10 === 0) out += `<text x="${f}%" y="26" text-anchor="middle">${f}</text>`;
  }
  ruler.innerHTML = `<svg>${out}</svg>`;
});

// vertex marks
const red = [[251, 151], [772, 151], [251, 595], [772, 595]];
const blue = [[264, 164], [273, 173], [758, 164], [749, 173], [264, 582], [273, 573], [758, 582], [749, 573]];
[379, 388, 397, 405, 511, 520, 529, 538, 643, 652, 661, 670].forEach(x => blue.push([x, 158], [x, 588]));
[278, 287, 295, 304].forEach(y => blue.push([262, y], [762, y]));

const mark = color => ([x, y]) => `<rect x="${x - 1}" y="${y - 1}" width="4" height="3" fill="${color}"/>`;
document.getElementById('verts').innerHTML = red.map(mark('#c01838')).join('') + blue.map(mark('#4a40d8')).join('');
```
